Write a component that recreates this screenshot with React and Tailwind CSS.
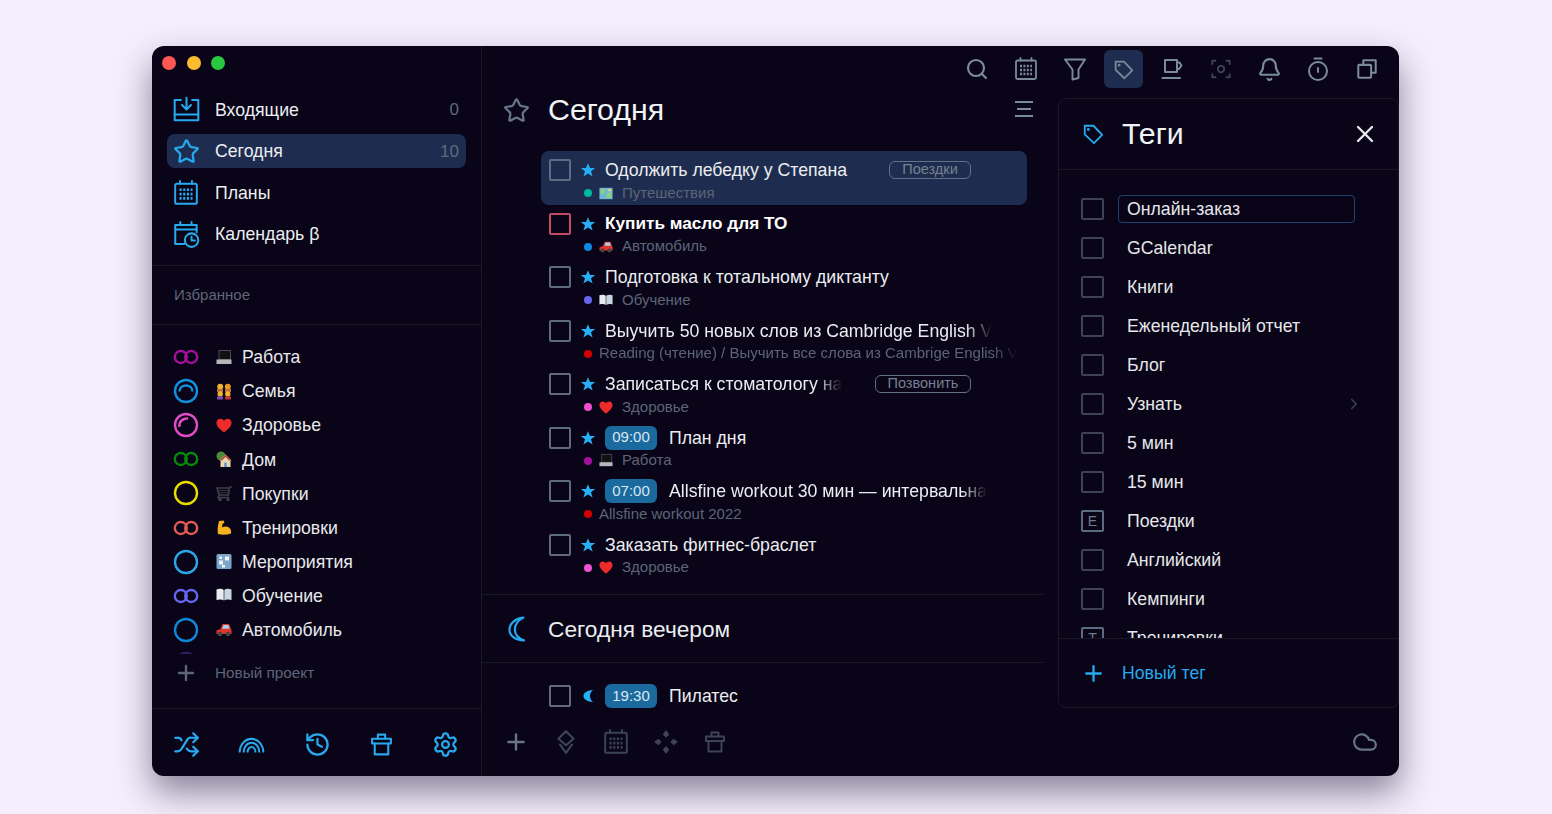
import React from 'react';
import { Search, Bell, X, Plus, Star, ChevronRight, Shuffle, History, Settings, Cloud } from 'lucide-react';

// Stroke icons that lucide has no close match for
function Ico({ size = 24, className = '', sw = 2, children }) {
  return (
    <svg width={size} height={size} viewBox="0 0 24 24" fill="none" stroke="currentColor" strokeWidth={sw} strokeLinecap="round" strokeLinejoin="round" className={className}>
      {children}
    </svg>
  );
}

const InboxIcon = (p) => (
  <Ico {...p}>
    <path d="M7 3.5H1.5V21.5H22.5V3.5H17" />
    <path d="M1.5 16.5H22.5" />
    <path d="M12 1.5V11.5M8 8L12 12L16 8" />
  </Ico>
);

const CalGrid = ({ dots = true, ...p }) => (
  <Ico {...p}>
    <rect x="2" y="3.5" width="20" height="18.5" rx="1.5" />
    <path d="M6.5 1V3.5M17.5 1V3.5" />
    {dots && <path strokeWidth="2.4" strokeDasharray="2 1.4" strokeLinecap="butt" d="M6 9H18M6 13H18M6 17H18" />}
  </Ico>
);

const CalClock = (p) => (
  <Ico {...p}>
    <path d="M10 20.5H2V3.5H21V10" />
    <path d="M6.5 1V3.5M16.5 1V3.5M2 7.5H21" />
    <circle cx="16.5" cy="17" r="6" fill="#090418" />
    <path d="M16.5 14V17.3H19.5" />
  </Ico>
);

const Funnel = (p) => (
  <Ico {...p} sw={1.9}>
    <path d="M2 2.5H22L15.5 12.5V21L9.5 22.5V12.5Z" />
  </Ico>
);

const TagIcon = (p) => (
  <Ico {...p}>
    <path d="M3 3H12.5L22 13L13 22L3 12.5Z" />
    <circle cx="7" cy="7" r="0.6" />
  </Ico>
);

const Mug = (p) => (
  <Ico {...p}>
    <path d="M5 3H17V15H5Z" />
    <path d="M17 5.5H19.5L21.5 8.5L19 12H17" />
    <path d="M2.5 21H20" />
  </Ico>
);

const FocusIcon = (p) => (
  <Ico {...p}>
    <path d="M6 3H2.5V6.5M18 3H21.5V6.5M2.5 17.5V21H6M21.5 17.5V21H18" />
    <circle cx="12" cy="12" r="3.5" />
  </Ico>
);

const TimerIcon = (p) => (
  <Ico {...p}>
    <circle cx="12" cy="14" r="9" />
    <path d="M8.5 1.5H15.5M12 11V15" />
  </Ico>
);

const CopyIcon = (p) => (
  <Ico {...p} sw={2.2}>
    <path d="M8 7V2.5H21.5V16H16.5" />
    <rect x="2.5" y="7.5" width="14" height="14" rx="1" />
  </Ico>
);

const Rainbow = (p) => (
  <Ico {...p} sw={1.8}>
    <path strokeLinecap="butt" d="M1.5 19C1.5 12.5 6 7 12 7S22.5 12.5 22.5 19M5 19C5 14.5 8 10.5 12 10.5S19 14.5 19 19M8.5 19C8.5 16.5 10 14.2 12 14.2S15.5 16.5 15.5 19" />
  </Ico>
);

const BinBox = (p) => (
  <Ico {...p}>
    <path d="M3 6.5H21V11H3Z" />
    <path d="M8.5 6.5V2.5H15.5V6.5" />
    <path d="M5.5 11V21.5H18.5V11" />
  </Ico>
);

const Layers = (p) => (
  <Ico {...p}>
    <path d="M12 2L19 9L12 15L5 9Z" />
    <path d="M6.5 14.5L12 22L17.5 14.5" />
  </Ico>
);

const MoveDots = ({ size = 26, className = '' }) => (
  <svg width={size} height={size} viewBox="0 0 24 24" fill="currentColor" className={className}>
    <path d="M12 1L15 5L12 8L9 5ZM12 16L15 19L12 23L9 19ZM1 12L5 9L8 12L5 15ZM16 12L19 9L23 12L19 15Z" />
  </svg>
);

const MoonOutline = (p) => (
  <Ico {...p} sw={2}>
    <path d="M18 1.5C9 2.5 5 8 5 12.5C5 18 10 22.5 18.5 22.5C13 20.5 10 17 10 12.5C10 8 13 4 18 1.5Z" />
  </Ico>
);

function MoonSolid() {
  return (
    <svg width="16" height="16" viewBox="0 0 16 16" fill="#27aff5">
      <path d="M13 2C7 2.3 3.5 4.8 3.5 8C3.5 11.2 7 13.7 13 14C11 12.5 10 10 10 8C10 6 11 3.5 13 2Z" />
    </svg>
  );
}

function SolidStar() {
  return (
    <svg width="16" height="16" viewBox="0 0 16 16" fill="#27aff5" className="shrink-0">
      <path d="M8 1.2L10 6H15.2L11 9.2L12.6 14.6L8 11.4L3.4 14.6L5 9.2L0.8 6H6Z" />
    </svg>
  );
}

// Project marks: double ring, plain ring, ring with inner arc
function ProjectMark({ kind, color }) {
  return (
    <svg width="26" height="26" viewBox="0 0 26 26" fill="none" stroke={color} strokeWidth="2.4">
      {kind === 'double' && (
        <>
          <circle cx="7.8" cy="13" r="6" />
          <circle cx="18.2" cy="13" r="6" />
        </>
      )}
      {kind !== 'double' && <circle cx="13" cy="13" r="11" />}
      {kind === 'arcR' && <path d="M6.5 13.5C6.5 5.5 19.5 5.5 19.5 13.5" />}
      {kind === 'arcL' && <path d="M6.5 15C5.5 9.5 10 6 15 6.5" />}
    </svg>
  );
}

// Small pictures standing in for the emoji of the reference
function Emoji({ name }) {
  const box = { width: 17, height: 17, viewBox: '0 0 16 16' };
  if (name === 'laptop') {
    return (
      <svg {...box}>
        <path d="M3 1H14.5V10H3Z" fill="#111" stroke="#8c8c94" strokeWidth="0.5" />
        <path d="M0.5 10H15.5V14.5H0.5Z" fill="#b4b6bd" />
      </svg>
    );
  }
  if (name === 'family') {
    return (
      <svg {...box}>
        <circle cx="4.2" cy="3.2" r="3" fill="#f0b429" />
        <circle cx="11.8" cy="3.2" r="3" fill="#e89a1c" />
        <path d="M1 5.5H7V8.5H1ZM9 5.5H15V8.5H9Z" fill="#b9703a" />
        <circle cx="4.2" cy="10.5" r="2.7" fill="#f0b429" />
        <circle cx="11.8" cy="10.5" r="2.7" fill="#f0b429" />
        <path d="M1 13H7V16H1Z" fill="#7c4bc0" />
        <path d="M9 13H15V16H9Z" fill="#c2353a" />
      </svg>
    );
  }
  if (name === 'heart') {
    return (
      <svg {...box}>
        <path d="M8 15C3 11 0.5 8.5 0.5 5.2C0.5 2.8 2.3 1.2 4.4 1.2C6 1.2 7.3 2 8 3.4C8.7 2 10 1.2 11.6 1.2C13.7 1.2 15.5 2.8 15.5 5.2C15.5 8.5 13 11 8 15Z" fill="#ee2b2b" />
      </svg>
    );
  }
  if (name === 'house') {
    return (
      <svg {...box}>
        <circle cx="5" cy="4.5" r="4.5" fill="#4a8a3a" />
        <path d="M9.5 3L15.5 9H14.5V15.5H4.5V9H3.5Z" fill="#e8d6b0" />
        <path d="M9.5 3L15.5 9H13L9.5 5.5L6 9H3.5Z" fill="#b8503c" />
        <path d="M8.2 11H10.8V15.5H8.2Z" fill="#6f93c4" />
      </svg>
    );
  }
  if (name === 'cart') {
    return (
      <svg {...box} fill="none" stroke="#3e4048" strokeWidth="1.6">
        <path d="M15.5 1L13.2 2.5H1L3 9.5H12.5L13.2 2.5M3 9.5L2 12H13" />
        <path d="M2 5H13M2.5 7.2H12.8" strokeWidth="0.8" />
        <circle cx="4" cy="14" r="1" fill="#3e4048" />
        <circle cx="12" cy="14" r="1" fill="#3e4048" />
      </svg>
    );
  }
  if (name === 'muscle') {
    return (
      <svg {...box}>
        <path d="M3 1.5L7.5 1L8.5 3L6.5 4.5L6 8C8 6.5 11 6.5 13 8C15 9.5 15.5 12 15 14C11 15.5 6 15.5 2 14.5C1 10 2 5 3 1.5Z" fill="#f5b120" />
      </svg>
    );
  }
  if (name === 'tile') {
    return (
      <svg {...box}>
        <rect x="0.5" y="0.5" width="15" height="15" rx="1.5" fill="#7aa7c9" />
        <path d="M3 7H7V11H3ZM9 3H13V7H9ZM6 11.5H9V14H6ZM3.5 3H6V5.5H3.5Z" fill="#f2f6fa" />
      </svg>
    );
  }
  if (name === 'book') {
    return (
      <svg {...box}>
        <path d="M0.5 2C3 1 6 1 7.7 2.5V13C6 11.7 3 11.7 0.5 12.5Z" fill="#e8edf2" />
        <path d="M15.5 2C13 1 10 1 8.3 2.5V13C10 11.7 13 11.7 15.5 12.5Z" fill="#c9d6e2" />
      </svg>
    );
  }
  if (name === 'car') {
    return (
      <svg {...box}>
        <path d="M0.5 9L4.5 7.5L6.5 2.5H13L15.5 8.5V12.5H0.5Z" fill="#e0342f" />
        <path d="M7.5 3.5H12.3L13.5 7.2H6.2Z" fill="#a7d2ea" />
        <circle cx="4" cy="12.5" r="2.3" fill="#444" />
        <circle cx="12" cy="12.5" r="2.3" fill="#444" />
      </svg>
    );
  }
  return (
    <svg {...box}>
      <rect x="0.5" y="1.5" width="15" height="13" fill="#6fb6d9" />
      <path d="M2 3H8L6 8L2 9ZM9 8L14 6V13H8Z" fill="#8ccf7e" />
      <path d="M10 3H14V5H10Z" fill="#f2d66b" />
    </svg>
  );
}

const navItems = [
  { label: 'Входящие', icon: <InboxIcon size={27} sw={1.8} />, count: '0' },
  { label: 'Сегодня', icon: <Star size={27} strokeWidth={2} />, count: '10', active: true },
  { label: 'Планы', icon: <CalGrid size={26} sw={1.8} /> },
  { label: 'Календарь β', icon: <CalClock size={27} sw={1.8} /> },
];

const projects = [
  { label: 'Работа', kind: 'double', color: '#a3109b', emoji: 'laptop' },
  { label: 'Семья', kind: 'arcR', color: '#1190dd', emoji: 'family' },
  { label: 'Здоровье', kind: 'arcL', color: '#e04cc6', emoji: 'heart' },
  { label: 'Дом', kind: 'double', color: '#058a0c', emoji: 'house' },
  { label: 'Покупки', kind: 'ring', color: '#e8dc00', emoji: 'cart' },
  { label: 'Тренировки', kind: 'double', color: '#e05b52', emoji: 'muscle' },
  { label: 'Мероприятия', kind: 'ring', color: '#2ba6e8', emoji: 'tile' },
  { label: 'Обучение', kind: 'double', color: '#6666ef', emoji: 'book' },
  { label: 'Автомобиль', kind: 'ring', color: '#0e87d9', emoji: 'car' },
  { label: '', kind: 'ring', color: '#2b1c63' },
];

const fade = '[mask-image:linear-gradient(to_left,transparent,black_26px)]';

const tasks = [
  { title: 'Одолжить лебедку у Степана', dot: '#00b89c', emoji: 'map', sub: 'Путешествия', tag: 'Поездки', tagW: 'w-[82px]', active: true },
  { title: 'Купить масло для ТО', bold: true, red: true, dot: '#0d87e0', emoji: 'car', sub: 'Автомобиль' },
  { title: 'Подготовка к тотальному диктанту', dot: '#6666ef', emoji: 'book', sub: 'Обучение' },
  { title: 'Выучить 50 новых слов из Cambridge English V', cut: true, dot: '#d20000', sub: 'Reading (чтение) / Выучить все слова из Cambrige English V', subCut: true },
  { title: 'Записаться к стоматологу на', cut: true, dot: '#f050d0', emoji: 'heart', sub: 'Здоровье', tag: 'Позвонить', tagW: 'w-[96px]' },
  { title: 'План дня', time: '09:00', dot: '#a3109b', emoji: 'laptop', sub: 'Работа' },
  { title: 'Allsfine workout 30 мин — интервальна', cut: true, time: '07:00', dot: '#d20000', sub: 'Allsfine workout 2022' },
  { title: 'Заказать фитнес-браслет', dot: '#f050d0', emoji: 'heart', sub: 'Здоровье' },
];

const tags = ['Онлайн-заказ', 'GCalendar', 'Книги', 'Еженедельный отчет', 'Блог', 'Узнать', '5 мин', '15 мин', 'Поездки', 'Английский', 'Кемпинги', 'Тренировки'];

function TaskRow({ t }) {
  return (
    <div className={`flex ml-[59px] w-[486px] h-[53.5px] rounded-lg pl-2 ${t.active ? 'bg-[#1e2d4f]' : ''}`}>
      <span className={`mt-2 w-[22px] h-[22px] shrink-0 rounded-[2px] border-2 ${t.red ? 'border-[#c44a63]' : 'border-[#5f6b7e]'}`} />
      <div className="ml-[9px] min-w-0 flex-1">
        <div className="mt-2 h-[22px] flex items-center">
          {t.moon ? <span className="w-4 shrink-0"><MoonSolid /></span> : <SolidStar />}
          {t.time && (
            <span className="ml-[9px] w-[52px] h-6 shrink-0 rounded-md bg-[#1b6a9e] text-[#d7e6f2] text-[15px] flex items-center justify-center">
              {t.time}
            </span>
          )}
          <span className={`${t.time ? 'ml-3' : 'ml-[9px]'} ${t.cut ? fade : ''} pt-px whitespace-nowrap ${t.bold ? 'text-[17.2px] font-bold text-white' : 'text-[17.7px] text-[#ecedf0]'}`}>
            {t.title}
          </span>
          {t.tag && (
            <span className={`ml-auto mr-[56px] ${t.tagW} h-[18px] shrink-0 rounded-md border border-[#667084] text-[#76808f] text-[14.5px] flex items-center justify-center`}>
              {t.tag}
            </span>
          )}
        </div>
        {t.sub && (
          <div className="mt-px h-[22px] flex items-center text-[15px] text-[#5d6478] whitespace-nowrap">
            <span className="ml-1 w-2 h-2 shrink-0 rounded-full" style={{ backgroundColor: t.dot }} />
            {t.emoji ? (
              <>
                <span className="ml-[7px] w-[14px] shrink-0 flex justify-center"><Emoji name={t.emoji} /></span>
                <span className="ml-[9px]">{t.sub}</span>
              </>
            ) : (
              <span className={`ml-[7px] ${t.subCut ? fade : ''}`}>{t.sub}</span>
            )}
          </div>
        )}
      </div>
    </div>
  );
}

function Sidebar() {
  return (
    <aside className="w-[330px] shrink-0 flex flex-col border-r border-[#1a1729]">
      <div className="h-[43px] shrink-0 flex items-center gap-[10.5px] pl-[10px] pb-[9px]">
        <span className="w-[14px] h-[14px] rounded-full bg-[#fc5753]" />
        <span className="w-[14px] h-[14px] rounded-full bg-[#fdbc2e]" />
        <span className="w-[14px] h-[14px] rounded-full bg-[#28c840]" />
      </div>

      {navItems.map((n) => (
        <div key={n.label} className="h-[41.5px] shrink-0 flex items-center">
          <div className={`mx-[15px] w-[300px] h-[34px] rounded-lg flex items-center pl-[5px] pr-[7px] ${n.active ? 'bg-[#1e2d4f]' : ''}`}>
            <span className="w-7 flex justify-center text-[#27a9ee]">{n.icon}</span>
            <span className="ml-[15px] pt-px text-[17.7px] text-[#eceef0]">{n.label}</span>
            {n.count && <span className="ml-auto text-[17px] text-[#5f6b7c]">{n.count}</span>}
          </div>
        </div>
      ))}

      <div className="mt-[10px] h-[60px] shrink-0 flex items-center pl-[22px] pt-px border-y border-[#1a1729] text-[15px] text-[#5f6578]">
        Избранное
      </div>

      <div className="mt-[15px] h-[314px] shrink-0 overflow-hidden">
        {projects.map((p, i) => (
          <div key={i} className="h-[34.1px] flex items-center pl-[21px]">
            <ProjectMark kind={p.kind} color={p.color} />
            {p.emoji && (
              <span className="ml-[17px] w-4 flex justify-center"><Emoji name={p.emoji} /></span>
            )}
            <span className="ml-[10px] pt-px text-[17.7px] text-[#e8e9ec]">{p.label}</span>
          </div>
        ))}
      </div>

      <div className="h-[38px] shrink-0 flex items-center pl-[22px] text-[#5f6578]">
        <Plus size={24} strokeWidth={2.4} />
        <span className="ml-[17px] text-[15.3px]">Новый проект</span>
      </div>

      <div className="mt-auto h-[68px] shrink-0 pt-1 border-t border-[#1a1729] flex items-center justify-between pl-[21px] pr-[22px] text-[#27a9ee]">
        <Shuffle size={27} strokeWidth={2} />
        <Rainbow size={27} />
        <History size={27} strokeWidth={2} />
        <BinBox size={25} />
        <Settings size={27} strokeWidth={2} />
      </div>
    </aside>
  );
}

function Toolbar() {
  const items = [
    { i: <Search size={24} strokeWidth={2.2} /> },
    { i: <CalGrid size={24} sw={1.8} /> },
    { i: <Funnel size={24} /> },
    { i: <TagIcon size={21} />, active: true },
    { i: <Mug size={24} sw={2} /> },
    { i: <FocusIcon size={22} />, dim: true },
    { i: <Bell size={25} strokeWidth={2} /> },
    { i: <TimerIcon size={24} /> },
    { i: <CopyIcon size={22} /> },
  ];
  return (
    <div className="h-[46px] shrink-0 flex items-center justify-end gap-[9.75px] pr-[12.5px]">
      {items.map((b, i) => (
        <span
          key={i}
          className={`w-[39px] h-[38px] rounded-md flex items-center justify-center ${b.active ? 'bg-[#1e2d4f]' : ''} ${b.dim ? 'text-[#3d4454]' : 'text-[#7c8b9c]'}`}
        >
          {b.i}
        </span>
      ))}
    </div>
  );
}

function TodayColumn() {
  return (
    <div className="w-[562px] shrink-0 overflow-hidden">
      <div className="h-9 flex items-center pl-[21px] pr-[9px]">
        <Star size={27} strokeWidth={2} className="text-[#67748a]" />
        <h1 className="ml-[18px] text-[30.3px] font-normal text-[#f2f3f5]">Сегодня</h1>
        <svg width="20" height="18" viewBox="0 0 20 18" fill="none" stroke="#7c8b9c" strokeWidth="2" className="ml-auto mr-px -mt-0.5">
          <path d="M1 2H19M3 9H17M1 16H19" />
        </svg>
      </div>

      <div className="pt-[23px]">
        {tasks.map((t) => <TaskRow key={t.title} t={t} />)}
      </div>

      <div className="mt-[15px] h-[69px] border-y border-[#1a1729] flex items-center pl-[22px]">
        <MoonOutline size={26} className="text-[#27a9ee]" />
        <h2 className="ml-[18px] pt-0.5 text-[22.7px] font-normal text-[#ecedf0]">Сегодня вечером</h2>
      </div>

      <div className="pt-[14px]">
        <TaskRow t={{ title: 'Пилатес', time: '19:30', moon: true }} />
      </div>
    </div>
  );
}

function TagsPanel() {
  return (
    <div className="mt-[6px] ml-[14px] w-[341px] h-[610px] shrink-0 rounded-lg border border-[#1a1729] flex flex-col">
      <div className="h-[71px] shrink-0 border-b border-[#1a1729] flex items-center pl-[23px] pr-[19px]">
        <TagIcon size={22} className="text-[#27a9ee]" />
        <h2 className="ml-[18px] text-[30.3px] font-normal text-[#f2f3f5]">Теги</h2>
        <X size={28} strokeWidth={2} className="ml-auto text-[#e8e9ec]" />
      </div>

      <div className="flex-1 min-h-0 overflow-hidden pt-[19.5px]">
        {tags.map((t, i) => (
          <div key={t} className="h-[39px] flex items-center pl-[22px]">
            <span className={`w-[23px] h-[22px] shrink-0 rounded-[2px] border-2 flex items-center justify-center text-[14px] ${t === 'Поездки' || t === 'Тренировки' ? 'border-[#5b6c80] text-[#6b7a8c]' : 'border-[#3d4352]'}`}>
              {t === 'Поездки' ? 'E' : t === 'Тренировки' ? 'T' : ''}
            </span>
            <div className={`ml-[14px] w-[237px] h-7 rounded pl-2 flex items-center justify-between border ${i === 0 ? 'border-[#1d4272]' : 'border-transparent'}`}>
              <span className="pt-px text-[17.7px] text-[#e6e7ea]">{t}</span>
              {t === 'Узнать' && <ChevronRight size={18} strokeWidth={2} className="-mr-[9px] text-[#3d4352]" />}
            </div>
          </div>
        ))}
      </div>

      <div className="h-[69px] shrink-0 border-t border-[#1a1729] flex items-center pl-[22px] text-[#27a9ee]">
        <Plus size={25} strokeWidth={2.2} />
        <span className="ml-[16px] text-[17.7px]">Новый тег</span>
      </div>
    </div>
  );
}

export default function App() {
  return (
    <div className="h-[814px] bg-[#f4eefd] pt-[46px] pl-[152px] overflow-hidden [font-family:'Liberation_Sans',sans-serif]">
      <div className="w-[1247px] h-[730px] rounded-xl bg-[#090418] flex overflow-hidden shadow-[0_16px_34px_rgba(50,40,70,0.55)]">
        <Sidebar />
        <main className="flex-1 min-w-0 flex flex-col">
          <Toolbar />
          <div className="flex-1 min-h-0 flex overflow-hidden">
            <TodayColumn />
            <TagsPanel />
          </div>
          <div className="h-[68px] shrink-0 flex items-center pl-[21px] pr-[21px] gap-[24px] text-[#3d4454]">
            <Plus size={26} strokeWidth={2.2} className="text-[#67748a]" />
            <Layers size={26} sw={2} />
            <CalGrid size={26} sw={1.8} />
            <MoveDots size={26} />
            <BinBox size={24} sw={2} />
            <Cloud size={26} strokeWidth={2} className="ml-auto text-[#67748a]" />
          </div>
        </main>
      </div>
    </div>
  );
}
